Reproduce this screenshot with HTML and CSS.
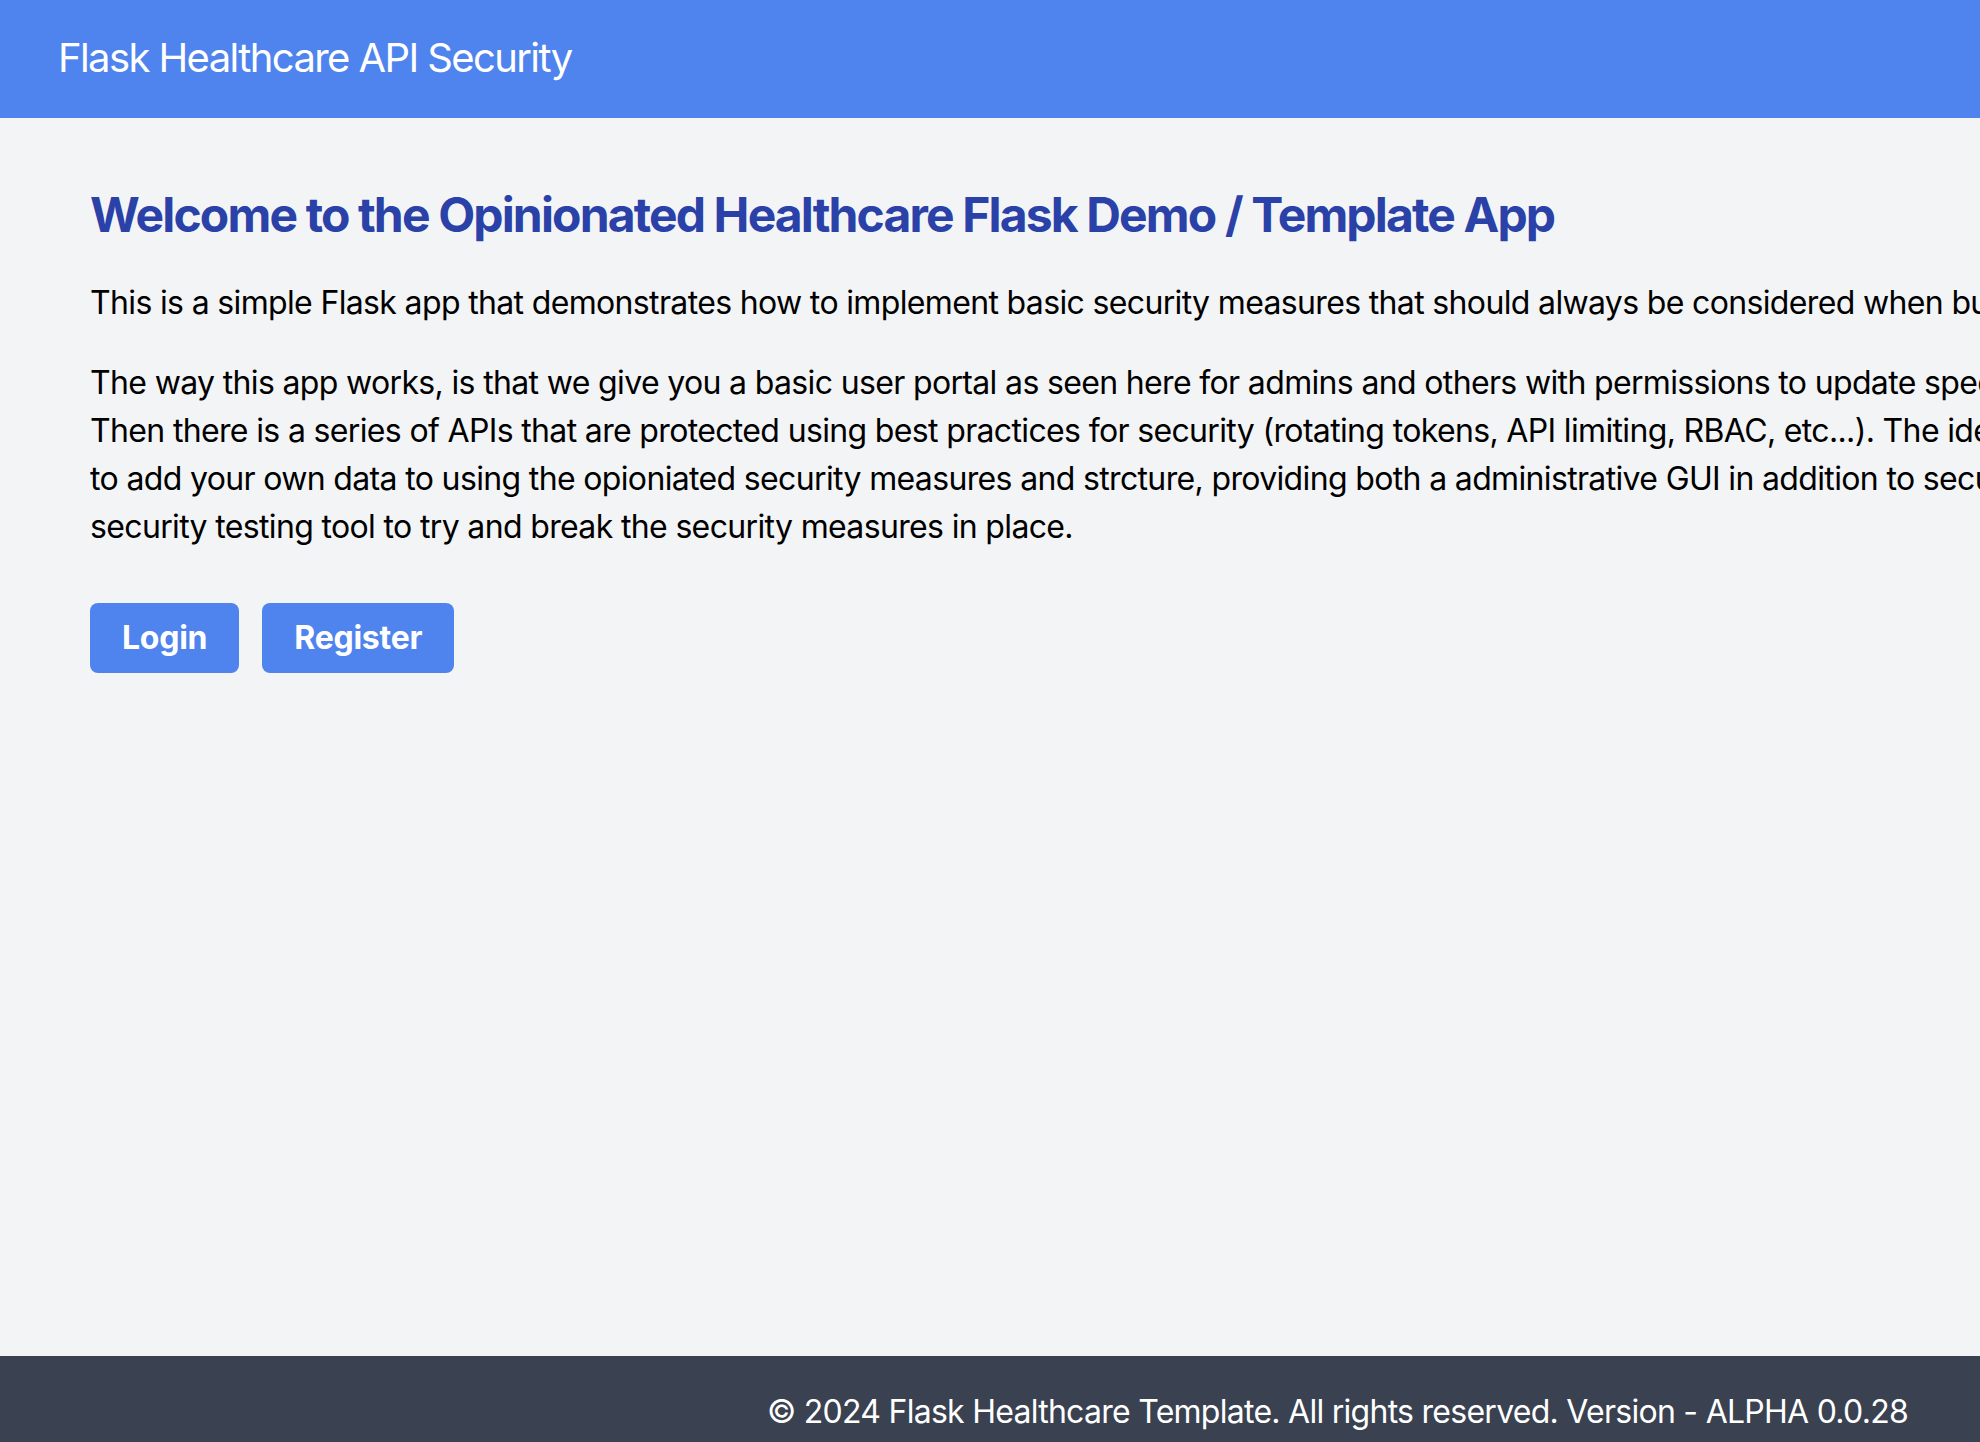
FILE: index.html
```html
<!DOCTYPE html>
<html lang="en">
<head>
<meta charset="utf-8">
<title>Flask Healthcare API Security</title>
<link rel="stylesheet" href="styles.css">
</head>
<body>
<div class="page">
  <header class="site-header">
    <div class="brand">Flask Healthcare API Security</div>
  </header>
  <main class="content">
    <h1 class="title">Welcome to the Opinionated Healthcare Flask Demo / Template App</h1>
    <p class="lead">This is a simple Flask app that demonstrates how to implement basic security measures that should always be considered when building healthcare applications.</p>
    <p class="lead">The way this app works, is that we give you a basic user portal as seen here for admins and others with permissions to update specific data (patients, providers, etc...).<br>Then there is a series of APIs that are protected using best practices for security (rotating tokens, API limiting, RBAC, etc...). The idea is that this is a template for you<br>to add your own data to using the opioniated security measures and strcture, providing both a administrative GUI in addition to secure APIs. There is also a<br>security testing tool to try and break the security measures in place.</p>
    <div class="actions">
      <a class="btn" href="#">Login</a>
      <a class="btn" href="#">Register</a>
    </div>
  </main>
  <footer class="site-footer">
    <p class="copy">© 2024 Flask Healthcare Template. All rights reserved. Version - ALPHA 0.0.28</p>
  </footer>
</div>
</body>
</html>
```
FILE: styles.css
```css
* { box-sizing: border-box; }

html, body {
  margin: 0;
  padding: 0;
}

body {
  font-family: Inter, "Liberation Sans", sans-serif;
  background: #f3f4f6;
  color: #000;
}

.page {
  width: 2675px;
  min-height: 1468px;
  display: flex;
  flex-direction: column;
}

.site-header {
  background: #4f83ee;
  padding: 30px 58px 32px;
}

.brand {
  color: #fff;
  font-size: 40px;
  line-height: 56px;
  font-weight: 400;
  letter-spacing: -1.6px;
}

.content {
  flex: 1;
  padding: 65px 90px 0;
}

.title {
  margin: 0 0 32px;
  font-size: 48px;
  line-height: 64px;
  font-weight: 700;
  color: #2a41a8;
  letter-spacing: -1.85px;
}

.lead {
  margin: 0 0 32px;
  font-size: 32px;
  line-height: 48px;
  letter-spacing: -0.65px;
  white-space: nowrap;
}

.actions {
  display: flex;
  gap: 23px;
  margin-top: 52px;
}

.btn {
  display: inline-block;
  background: #4f83ee;
  color: #fff;
  text-decoration: none;
  font-weight: 700;
  font-size: 32px;
  line-height: 48px;
  padding: 11px 32px;
  border-radius: 8px;
  letter-spacing: -0.25px;
}

.site-footer {
  background: #3a4150;
  padding: 32px 0;
}

.copy {
  margin: 0;
  text-align: center;
  color: #fff;
  font-size: 32px;
  line-height: 48px;
  letter-spacing: -0.73px;
}
```
